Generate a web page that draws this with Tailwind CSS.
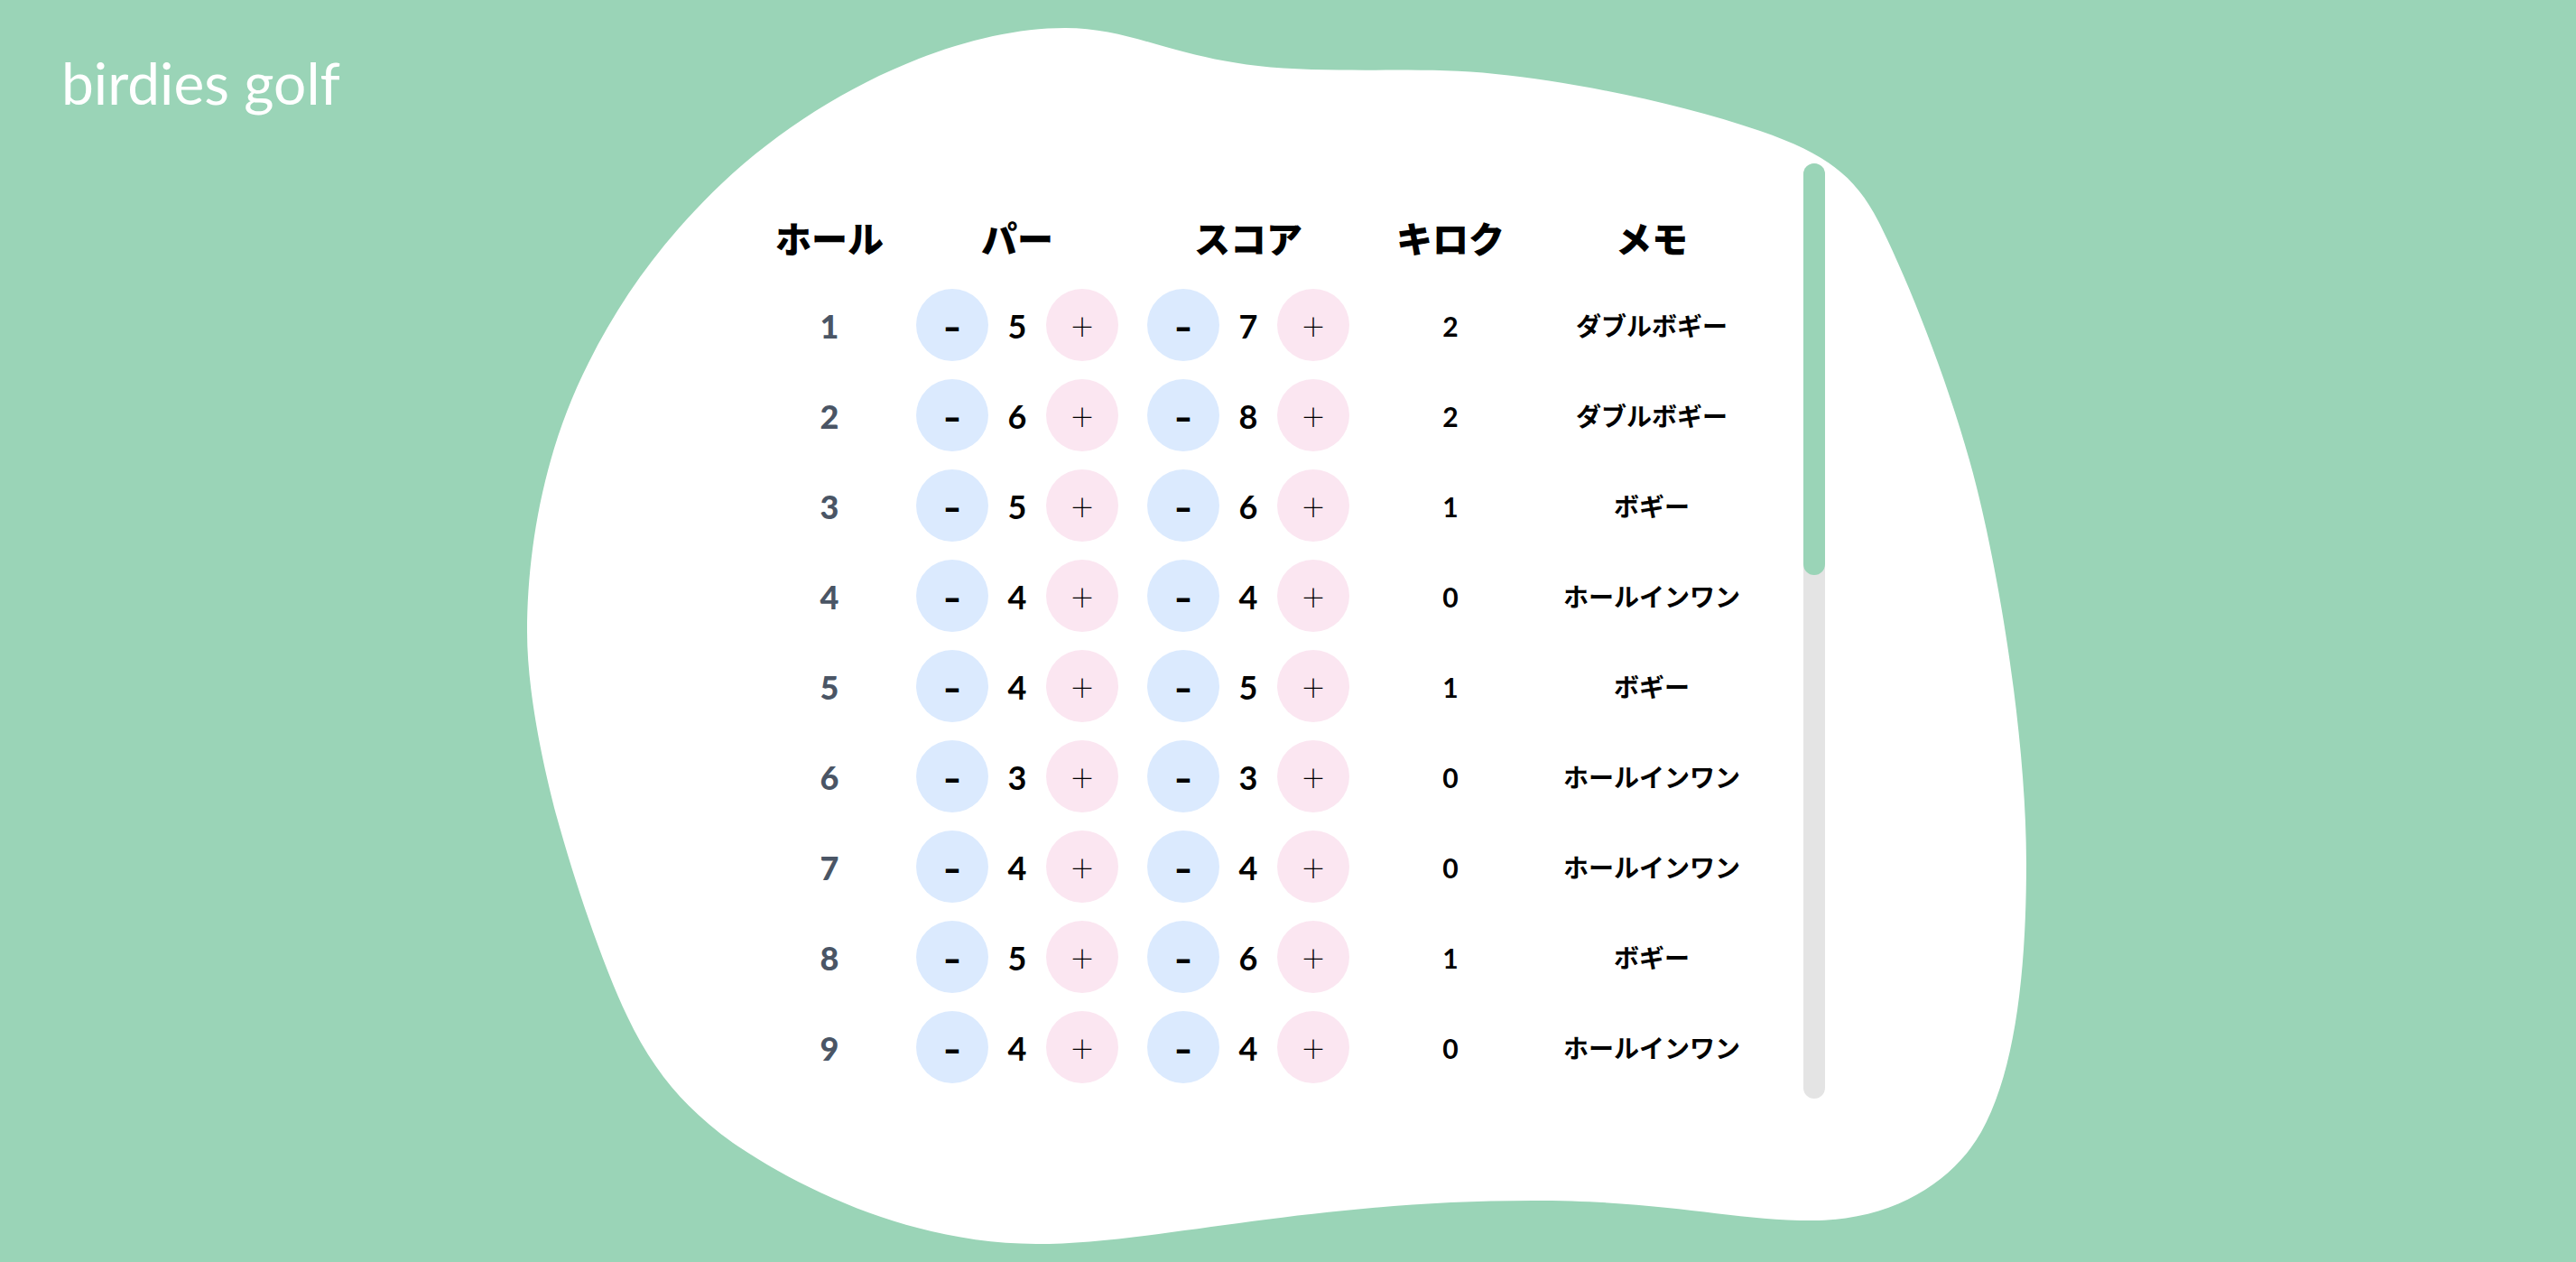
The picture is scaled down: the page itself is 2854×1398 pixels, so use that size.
<!DOCTYPE html>
<html lang="ja">
<head>
<meta charset="utf-8">
<meta name="viewport" content="width=device-width, initial-scale=1">
<title>birdies golf</title>
<script src="https://cdn.jsdelivr.net/npm/@tailwindcss/browser@4"></script>
</head>
<body class="bg-[#9ad4b7] font-['Lato','Noto_Sans_CJK_JP',sans-serif] text-black">
<div class="relative grid min-h-screen overflow-hidden">
  <svg class="absolute inset-0 h-full w-full" viewBox="0 0 2854 1398" preserveAspectRatio="xMidYMid meet" aria-hidden="true">
    <path fill="#fff" d="M1180 31C1265 31 1310 74 1453 77C1530 79 1590 75 1657 82C1745 91 1860 114 1950 145C2025 171 2056 196 2081 245C2113 308 2163 432 2190 540C2216 644 2245 820 2245 956C2245 1075 2233 1187 2195 1254C2165 1307 2100 1352 2008 1352C1915 1352 1850 1330 1698 1330C1450 1330 1280 1378 1148 1378C1020 1378 897 1324 812 1266C760 1229 724 1187 695 1126C670 1074 639 985 616 902C601 845 584 765 584 700C584 610 602 500 652 402C689 328 736 264 800 203C908 101 1060 31 1180 31Z"/>
  </svg>

  <header class="relative col-start-1 row-start-1 self-start justify-self-start px-17 pt-14">
    <a href="#" class="block text-[64px] leading-[72px] font-normal text-white">birdies golf</a>
  </header>

  <main class="relative col-start-1 row-start-1 flex w-[1190px] items-stretch justify-between self-center justify-self-center pl-[7px]">
    <div class="pt-[35px] pb-[7px]">
      <table class="table-fixed text-center">
        <colgroup>
          <col class="w-[160px]"><col class="w-[256px]"><col class="w-[256px]"><col class="w-[192px]"><col class="w-[254px]">
        </colgroup>
        <thead>
          <tr class="h-[94px] font-['Noto_Sans_CJK_JP',sans-serif] text-[40px] leading-none">
            <th scope="col" class="p-0 font-black">ホール</th>
            <th scope="col" class="p-0 font-black">パー</th>
            <th scope="col" class="p-0 font-black">スコア</th>
            <th scope="col" class="p-0 font-black">キロク</th>
            <th scope="col" class="p-0 font-black">メモ</th>
          </tr>
        </thead>
        <tbody id="holes"></tbody>
      </table>
    </div>
    <div class="w-6 rounded-full bg-[#e4e4e4]" role="scrollbar" aria-controls="holes" aria-orientation="vertical" aria-valuenow="0">
      <div class="h-[44%] rounded-full bg-[#9ad4b7]"></div>
    </div>
  </main>
</div>

<script>
  const holes = [
    { par: 5, score: 7 }, { par: 6, score: 8 }, { par: 5, score: 6 },
    { par: 4, score: 4 }, { par: 4, score: 5 }, { par: 3, score: 3 },
    { par: 4, score: 4 }, { par: 5, score: 6 }, { par: 4, score: 4 }
  ];
  const memo = { 0: 'ホールインワン', 1: 'ボギー', 2: 'ダブルボギー' };

  const stepper = (hole, key, label) => `
    <td class="p-0">
      <div class="flex items-center justify-center">
        <button type="button" data-hole="${hole}" data-key="${key}" data-step="-1" aria-label="${label}を減らす" class="flex size-20 items-center justify-center rounded-full bg-blue-100 pt-1 font-['Inter',sans-serif] text-[44px] leading-none font-semibold">-</button>
        <span class="w-16 pt-0.5 text-[36px] leading-none font-bold">${holes[hole][key]}</span>
        <button type="button" data-hole="${hole}" data-key="${key}" data-step="1" aria-label="${label}を増やす" class="flex size-20 items-center justify-center rounded-full bg-[#fbe6f1] pt-0.5 font-['Noto_Sans_CJK_JP',sans-serif] text-[28px] leading-none font-light">＋</button>
      </div>
    </td>`;

  const render = () => {
    document.getElementById('holes').innerHTML = holes.map((h, i) => `
      <tr class="h-[100px]">
        <th scope="row" class="p-0 pt-0.5 text-[36px] leading-none font-black text-gray-600">${i + 1}</th>
        ${stepper(i, 'par', 'パー')}
        ${stepper(i, 'score', 'スコア')}
        <td class="p-0 pt-0.5 text-[30px] leading-none font-bold">${h.score - h.par}</td>
        <td class="p-0 font-['Noto_Sans_CJK_JP',sans-serif] text-[28px] leading-none font-bold">${memo[h.score - h.par] ?? ''}</td>
      </tr>`).join('');
  };

  document.getElementById('holes').addEventListener('click', (e) => {
    const b = e.target.closest('button');
    if (!b) return;
    holes[b.dataset.hole][b.dataset.key] += Number(b.dataset.step);
    render();
  });
  render();
</script>
</body>
</html>
